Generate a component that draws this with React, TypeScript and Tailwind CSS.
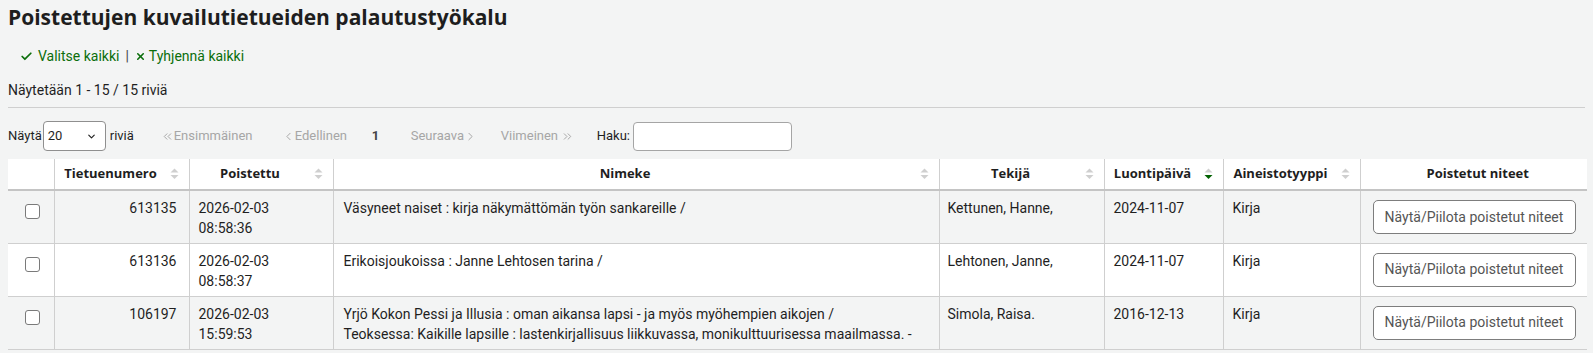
import React from 'react';
import { Check, X, ChevronLeft, ChevronRight, ChevronsLeft, ChevronsRight, ChevronDown } from 'lucide-react';

type Row = {
  id: string;
  deleted: [string, string];
  title: string[];
  author: string;
  created: string;
  type: string;
};

const rows: Row[] = [
  {
    id: '613135',
    deleted: ['2026-02-03', '08:58:36'],
    title: ['Väsyneet naiset : kirja näkymättömän työn sankareille /'],
    author: 'Kettunen, Hanne,',
    created: '2024-11-07',
    type: 'Kirja',
  },
  {
    id: '613136',
    deleted: ['2026-02-03', '08:58:37'],
    title: ['Erikoisjoukoissa : Janne Lehtosen tarina /'],
    author: 'Lehtonen, Janne,',
    created: '2024-11-07',
    type: 'Kirja',
  },
  {
    id: '106197',
    deleted: ['2026-02-03', '15:59:53'],
    title: [
      'Yrjö Kokon Pessi ja Illusia : oman aikansa lapsi - ja myös myöhempien aikojen /',
      'Teoksessa: Kaikille lapsille : lastenkirjallisuus liikkuvassa, monikulttuurisessa maailmassa. -',
    ],
    author: 'Simola, Raisa.',
    created: '2016-12-13',
    type: 'Kirja',
  },
];

// small up/down sort arrows, as in DataTables headers
const SortIcon: React.FC<{ active?: boolean }> = ({ active }) => (
  <svg width="9" height="12" viewBox="0 0 9 12" className="absolute right-[10px] top-1/2 -translate-y-1/2">
    <path d="M4.5 0.5 L8.5 4.5 L0.5 4.5 Z" fill="#cfcfcf" />
    <path d="M0.5 7 L8.5 7 L4.5 11 Z" fill={active ? '#006100' : '#cfcfcf'} />
  </svg>
);

const headers: { label: string; w: string; sort: boolean; active?: boolean }[] = [
  { label: '', w: 'w-[46px]', sort: false },
  { label: 'Tietuenumero', w: 'w-[135px]', sort: true },
  { label: 'Poistettu', w: 'w-[144px]', sort: true },
  { label: 'Nimeke', w: 'w-[606px]', sort: true },
  { label: 'Tekijä', w: 'w-[165px]', sort: true },
  { label: 'Luontipäivä', w: 'w-[119px]', sort: true, active: true },
  { label: 'Aineistotyyppi', w: 'w-[137px]', sort: true },
  { label: 'Poistetut niteet', w: 'w-[227px]', sort: false },
];

const App: React.FC = () => {
  return (
    <div className="min-h-screen bg-[#f3f4f4] pl-2 text-[#1f1f1f] font-['Roboto',sans-serif] text-[14px]">
      <h1 className="font-['Open_Sans',sans-serif] text-[21px] font-bold leading-[35px] text-[#1e1e1e]">
        Poistettujen kuvailutietueiden palautustyökalu
      </h1>

      {/* select / clear links */}
      <div className="mt-px flex h-[40px] items-center pl-[12px] text-[#0b6e0b]">
        <Check className="mr-[5px] h-[13px] w-[13px]" strokeWidth={3.2} />
        <span>Valitse kaikki</span>
        <span className="mx-[6px] text-[#444]">|</span>
        <X className="mr-[3px] h-[11px] w-[11px]" strokeWidth={3.5} />
        <span>Tyhjennä kaikki</span>
      </div>

      <div className="flex h-[31px] items-center pb-[2px]">Näytetään 1 - 15 / 15 riviä</div>
      <div className="mr-2 h-px bg-[#cfcfcf]" />

      {/* length, pagination, search */}
      <div className="mt-[13px] flex h-[30px] items-center whitespace-nowrap text-[13px]">
        <span>Näytä</span>
        <div className="ml-[1px] flex h-[30px] w-[63px] items-center justify-between rounded-[4px] border border-[#8f8f8f] bg-white pl-[4px] pr-[8px]">
          <span>20</span>
          <ChevronDown className="h-[11px] w-[11px] shrink-0" strokeWidth={2.5} />
        </div>
        <span className="ml-[4px] w-[22px]">riviä</span>
        <div className="ml-[29px] flex w-[89px] items-center justify-between text-[#a6a6a6]">
          <ChevronsLeft className="h-[13px] w-[13px] shrink-0" strokeWidth={1.8} />
          <span>Ensimmäinen</span>
        </div>
        <div className="ml-[32px] flex w-[60px] items-center justify-between text-[#a6a6a6]">
          <ChevronLeft className="h-[13px] w-[13px] shrink-0" strokeWidth={1.8} />
          <span>Edellinen</span>
        </div>
        <span className="ml-[30px] w-[6px] text-center font-bold text-[#444]">1</span>
        <div className="ml-[33px] flex w-[61px] items-center justify-between text-[#a6a6a6]">
          <span>Seuraava</span>
          <ChevronRight className="h-[13px] w-[13px] shrink-0" strokeWidth={1.8} />
        </div>
        <div className="ml-[29px] flex w-[73px] items-center justify-between text-[#a6a6a6]">
          <span>Viimeinen</span>
          <ChevronsRight className="h-[13px] w-[13px] shrink-0" strokeWidth={1.8} />
        </div>
        <span className="ml-[23px]">Haku:</span>
        <div className="ml-[3px] h-[29px] w-[159px] rounded-[4px] border border-[#a5a5a5] bg-white" />
      </div>

      <table className="mt-[8px] w-[1579px] table-fixed border-collapse">
        <thead>
          <tr className="h-[31px] bg-white">
            {headers.map((h, i) => (
              <th
                key={i}
                className={`${h.w} relative border-b-2 border-b-[#c4c4c4] ${i > 0 ? 'border-l border-l-[#cfcfcf]' : ''} ${h.sort ? 'pr-[30px]' : ''} pl-[8px] text-center font-['Open_Sans',sans-serif] text-[13px] font-bold text-[#1e1e1e]`}
              >
                {h.label}
                {h.sort && <SortIcon active={h.active} />}
              </th>
            ))}
          </tr>
        </thead>
        <tbody>
          {rows.map((r, i) => (
            <tr key={r.id} className={`h-[53px] border-b border-[#cfcfcf] align-top ${i % 2 === 0 ? 'bg-[#f3f4f4]' : 'bg-white'}`}>
              <td className="pt-[13px]">
                <div className="ml-[17px] h-[15px] w-[15px] rounded-[3px] border border-[#7a7a7a] bg-white" />
              </td>
              <td className="border-l border-[#cfcfcf] pr-[12px] pt-[7px] text-right leading-[20px]">{r.id}</td>
              <td className="border-l border-[#cfcfcf] pl-[9px] pt-[7px] leading-[20px]">
                <div>{r.deleted[0]}</div>
                <div>{r.deleted[1]}</div>
              </td>
              <td className="border-l border-[#cfcfcf] pl-[10px] pt-[7px] leading-[20px]">
                {r.title.map((t) => (
                  <div key={t}>{t}</div>
                ))}
              </td>
              <td className="border-l border-[#cfcfcf] pl-[8px] pt-[7px] leading-[20px]">{r.author}</td>
              <td className="border-l border-[#cfcfcf] pl-[9px] pt-[7px] leading-[20px]">{r.created}</td>
              <td className="border-l border-[#cfcfcf] pl-[9px] pt-[7px] leading-[20px]">{r.type}</td>
              <td className="border-l border-[#cfcfcf] pl-[12px] pt-[9px]">
                <button className="h-[34px] w-[203px] rounded-[5px] border border-[#7d7d7d] bg-white text-[#555]">
                  Näytä/Piilota poistetut niteet
                </button>
              </td>
            </tr>
          ))}
        </tbody>
      </table>
    </div>
  );
};

export default App;
